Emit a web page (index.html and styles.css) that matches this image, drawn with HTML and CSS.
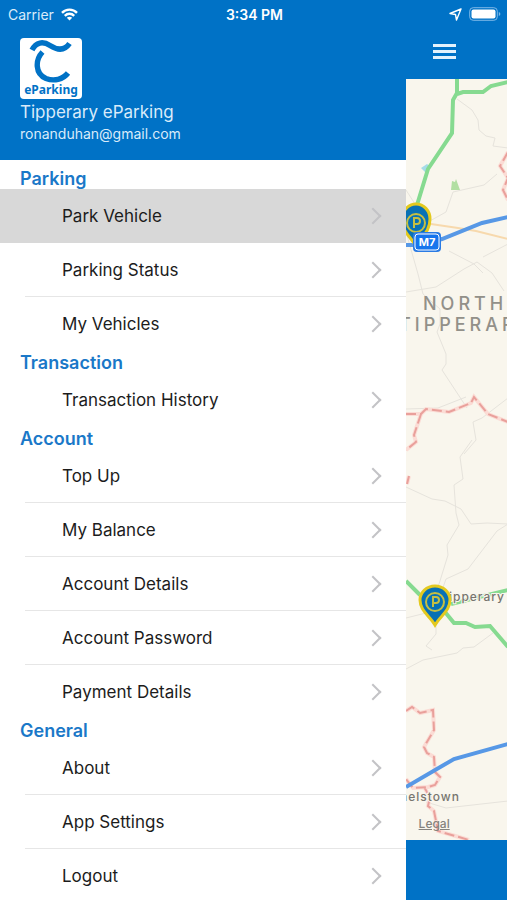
FILE: index.html
```
<!DOCTYPE html>
<html lang="en">
<head>
    <meta charset="UTF-8">
    <meta name="viewport" content="width=device-width, initial-scale=1.0">
    <title>Tipperary eParking</title>
    <link rel="stylesheet" href="styles.css">
</head>
<body>
    <div class="status-bar">
        <div class="carrier">
            <span>Carrier</span>
            <svg width="17" height="13" viewBox="0 0 17 13" fill="none" stroke="#fff" stroke-width="2.4">
                <path d="M1 4.8C5 .6 12 .6 16 4.8"/>
                <path d="M3.8 7.8c2.7-2.7 6.7-2.7 9.4 0"/>
                <path d="M8.5 12.5L5.8 9.8c1.5-1.3 3.9-1.3 5.4 0z" fill="#fff" stroke="none"/>
            </svg>
        </div>
        <span class="clock">3:34 PM</span>
        <div class="indicators">
            <svg width="13" height="13" viewBox="0 0 13 13" fill="none" stroke="#fff" stroke-width="1.4" stroke-linejoin="round">
                <path d="M12 1L1 5.5l5.500 1L7.5 12z"/>
            </svg>
            <svg width="32" height="14" viewBox="0 0 32 14">
                <rect x=".7" y=".7" width="27.6" height="12.6" rx="3.5" fill="none" stroke="#7db8e8"/>
                <rect x="2.5" y="2.5" width="24" height="9" rx="2" fill="#fff"/>
                <path d="M29.8 5v4q1.6-.5 1.6-2t-1.6-2z" fill="#7db8e8"/>
            </svg>
        </div>
    </div>

    <div class="app">
        <div class="drawer">
            <div class="profile">
                <div class="logo">
                    <svg width="61" height="45" viewBox="0 0 61 45" fill="none" stroke="#0072c6" stroke-width="5.4">
                        <path d="M11 12C15 4 22 3 29 7.500s14 6 19.500-2"/>
                        <path d="M21.500 14C14 22 14 36 25 40.500c8 3 17 1 22-5.500"/>
                    </svg>
                    <span>eParking</span>
                </div>
                <p class="name">Tipperary eParking</p>
                <p class="email">ronanduhan@gmail.com</p>
            </div>

            <nav class="menu">
                <h2>Parking</h2>
                <ul>
                    <li><a href="#park" class="active">Park Vehicle</a></li>
                    <li><a href="#status">Parking Status</a></li>
                    <li><a href="#vehicles">My Vehicles</a></li>
                </ul>
                <h2>Transaction</h2>
                <ul>
                    <li><a href="#history">Transaction History</a></li>
                </ul>
                <h2>Account</h2>
                <ul>
                    <li><a href="#topup">Top Up</a></li>
                    <li><a href="#balance">My Balance</a></li>
                    <li><a href="#details">Account Details</a></li>
                    <li><a href="#password">Account Password</a></li>
                    <li><a href="#payment">Payment Details</a></li>
                </ul>
                <h2>General</h2>
                <ul>
                    <li><a href="#about">About</a></li>
                    <li><a href="#settings">App Settings</a></li>
                    <li><a href="#logout">Logout</a></li>
                </ul>
            </nav>
        </div>

        <div class="content">
            <div class="toolbar">
                <button class="menu-button" aria-label="Menu"><span></span><span></span><span></span></button>
            </div>
            <div class="map">
                <svg class="map-canvas" viewBox="405 79 102 761" preserveAspectRatio="xMinYMin slice">
                    <!-- minor roads -->
                    <g class="minor">
                        <path d="M456 99l15 11 6 10 1 10 7 6 9 2-2 8 15 2"/>
                        <path d="M405 190l9 14m13 18l18-10 7-20 31-7 13-11"/>
                        <path d="M405 232l12 42 5 20 17 15 0 15-3 8 9 22 0 10-4 6 25 38"/>
                        <path d="M405 292l30-5 28-18 13-7 15 11 12 18"/>
                        <path d="M405 409l32-1 28-11m42 1l-26 20-9 4 3 18-12 14"/>
                        <path d="M471 440l-12 17 3 22-9 6 2 28 3 12-12 20 1 10-13 42"/>
                        <path d="M405 487l26 12 13 2 16 8 10 15 16-1 21 1-11 7-29 38-22 10-7 20"/>
                        <path d="M405 618l20-5m10 8v13l-10 12 6 4M405 669l17-9 34-7 6-5 11-1 19-14"/>
                        <path d="M425 802l20 6 62-7M448 251l25 13 9 9m0-16l25-13"/>
                    </g>
                    <path class="orange" d="M430 224l27 4 18 3 32 8"/>
                    <path d="M420 168l6-4 4 3-5 6z" fill="#a5dce8"/>
                    <path d="M450 190l1-9 3 1 1-3 4 11z" fill="#b2dfa2"/>

                    <!-- county borders -->
                    <g class="border-glow">
                        <path d="M507 152l-8 14 8 12-5 12 5 10"/>
                        <path d="M405 414h15l5-5 23 3 22-9 3-6 14 17 20 8M420 414l-7 21 2 7-10 8M408 476l-2 8"/>
                        <path d="M405 711l6-4 8 6 13-3 1 20-10 17 3 6 7 4 1 15 5 5-5 8-7 2-15 1-7-9M423 787l6 10-2 9 6 5 4 20 31 9"/>
                    </g>
                    <g class="border">
                        <path d="M507 152l-8 14 8 12-5 12 5 10"/>
                        <path d="M405 414h15l5-5 23 3 22-9 3-6 14 17 20 8M420 414l-7 21 2 7-10 8M408 476l-2 8"/>
                        <path d="M405 711l6-4 8 6 13-3 1 20-10 17 3 6 7 4 1 15 5 5-5 8-7 2-15 1-7-9M423 787l6 10-2 9 6 5 4 20 31 9"/>
                    </g>

                    <!-- main roads -->
                    <g class="green">
                        <path d="M456 79v14l-4 7-1 33-24 36-11 36"/>
                        <path d="M456 94l6-2h20l8-6 17-4"/>
                        <path d="M405 581l14 14m25 17l9 11h12l9 4 15-1 18 21"/>
                        <path d="M450 604l57-14"/>
                    </g>
                    <path class="blue" d="M405 245h12l24-6 40-16 26-6"/>
                    <path class="blue" d="M405 787l48-28 54-15"/>

                    <text class="region" x="422" y="310">NORTH</text>
                    <text class="region" x="398" y="331">TIPPERARY</text>
                    <text class="town" x="504" y="601" text-anchor="end">Tipperary</text>
                    <text class="town" x="459" y="801" text-anchor="end">Mitchelstown</text>

                    <!-- parking pins -->
                    <g transform="translate(415 223)">
                        <path class="pin" d="M0 23C-5 14-14 9-14-4a14 15 0 0 1 28 0C14 9 5 14 0 23z"/>
                        <circle class="ring" r="9"/>
                        <path class="letter" d="M-2 5v-10h3a3 3 0 0 1 0 6h-3"/>
                    </g>
                    <rect x="412" y="232" width="28" height="20" rx="4" fill="#2a7be4"/>
                    <rect x="414" y="234" width="24" height="16" rx="3" fill="#1675ed" stroke="#fff"/>
                    <text class="shield" x="426" y="246" text-anchor="middle">M7</text>
                    <g transform="translate(434 602)">
                        <path class="pin" d="M0 23C-5 14-15 9-15-2a15 14 0 0 1 30 0C15 9 5 14 0 23z"/>
                        <circle class="ring" r="9"/>
                        <path class="letter" d="M-2 5v-10h3a3 3 0 0 1 0 6h-3"/>
                    </g>
                </svg>
                <a href="#legal" class="legal">Legal</a>
            </div>
            <div class="footer"></div>
        </div>
    </div>
</body>
</html>
```

FILE: styles.css
```
* {
    box-sizing: border-box;
}
body {
    display: flex;
    flex-direction: column;
    height: 100vh;
    margin: 0;
    overflow: hidden;
    background-color: #0072c6;
    color: #1c1c1c;
    font-family: Inter, "Liberation Sans", sans-serif;
}
h2, p, ul {
    margin: 0;
    padding: 0;
}

.status-bar {
    display: grid;
    grid-template-columns: 1fr auto 1fr;
    align-items: center;
    flex: none;
    height: 28px;
    padding: 0 6px 0 8px;
    color: #fff;
    font-size: 14px;
}
.carrier,
.indicators {
    display: flex;
    align-items: center;
    gap: 7px;
    color: #d9ebfa;
}
.indicators {
    justify-content: flex-end;
}
.clock {
    font-weight: 600;
}

.app {
    display: flex;
    flex: 1;
    min-height: 0;
}
.drawer {
    width: 80%;
    overflow-y: auto;
    scrollbar-width: none;
    background-color: #fff;
}
.profile {
    height: 132px;
    padding: 10px 20px;
    background-color: #0072c6;
    color: #d9ebfa;
}
.logo {
    display: flex;
    flex-direction: column;
    align-items: center;
    width: 62px;
    height: 61px;
    border-radius: 4px;
    background-color: #fff;
    color: #0072c6;
    font: bold 12px/14px "Noto Sans", sans-serif;
}
.logo svg {
    flex: none;
}
.name {
    margin-top: 2px;
    font-size: 17px;
    line-height: 22px;
}
.email {
    font-size: 14px;
    line-height: 22px;
}

.menu {
    padding-top: 7px;
}
.menu h2 {
    padding: 2px 0 0 20px;
    color: #1a78c8;
    font-size: 18px;
    font-weight: 600;
    line-height: 20px;
}
.menu ul {
    list-style: none;
}
.menu a {
    display: flex;
    align-items: center;
    justify-content: space-between;
    height: 54px;
    padding: 0 27px 0 62px;
    color: inherit;
    font-size: 17px;
    text-decoration: none;
}
.menu a::after {
    content: "";
    width: 10px;
    height: 10px;
    border: solid #c3c3c6;
    border-width: 2px 2px 0 0;
    transform: rotate(45deg);
}
.menu a.active {
    background-color: #d8d8d8;
}
.menu li:not(:last-child) {
    background: linear-gradient(#e6e6e6, #e6e6e6) 25px 100% / 100% 1px no-repeat;
}

.content {
    display: flex;
    flex: 1;
    flex-direction: column;
    min-width: 0;
}
.toolbar {
    flex: none;
    height: 51px;
    padding: 10px 21px;
}
.menu-button {
    display: flex;
    flex-direction: column;
    gap: 3px;
    padding: 6px;
    border: none;
    background: none;
}
.menu-button span {
    width: 23px;
    height: 3px;
    background-color: #e4f2fc;
}

.map {
    position: relative;
    flex: 1;
    min-height: 0;
    overflow: hidden;
    background-color: #f9f6ed;
}
.map-canvas {
    display: block;
    width: 100%;
    height: 100%;
    fill: none;
}
.minor {
    stroke: #e6e3dc;
}
.orange {
    stroke: #f7d9ad;
    stroke-width: 2;
}
.border-glow {
    stroke: #fbdcd5;
    stroke-width: 4;
}
.border {
    stroke: #e9a09b;
    stroke-width: 2;
    stroke-dasharray: 10 4;
}
.green {
    stroke: #86da90;
    stroke-width: 4;
}
.blue {
    stroke: #5798e6;
    stroke-width: 4;
}
.region {
    fill: #929089;
    font-size: 18px;
    font-weight: 500;
    letter-spacing: 4px;
}
.town {
    fill: #77756f;
    stroke: #f9f6ed;
    stroke-width: 2px;
    paint-order: stroke;
    font-size: 12px;
    font-weight: 500;
    letter-spacing: 1px;
}
.shield {
    fill: #fff;
    font-size: 11px;
    font-weight: 700;
}
.pin {
    fill: #0871b5;
    stroke: #e3c91f;
    stroke-width: 3;
}
.ring {
    stroke: #c5bf43;
    stroke-width: 2;
}
.letter {
    stroke: #c5bf43;
    stroke-width: 2;
}
.legal {
    position: absolute;
    bottom: 9px;
    left: 13px;
    color: #85837d;
    font-size: 12px;
    font-weight: 500;
}
.footer {
    flex: none;
    height: 60px;
}
```
